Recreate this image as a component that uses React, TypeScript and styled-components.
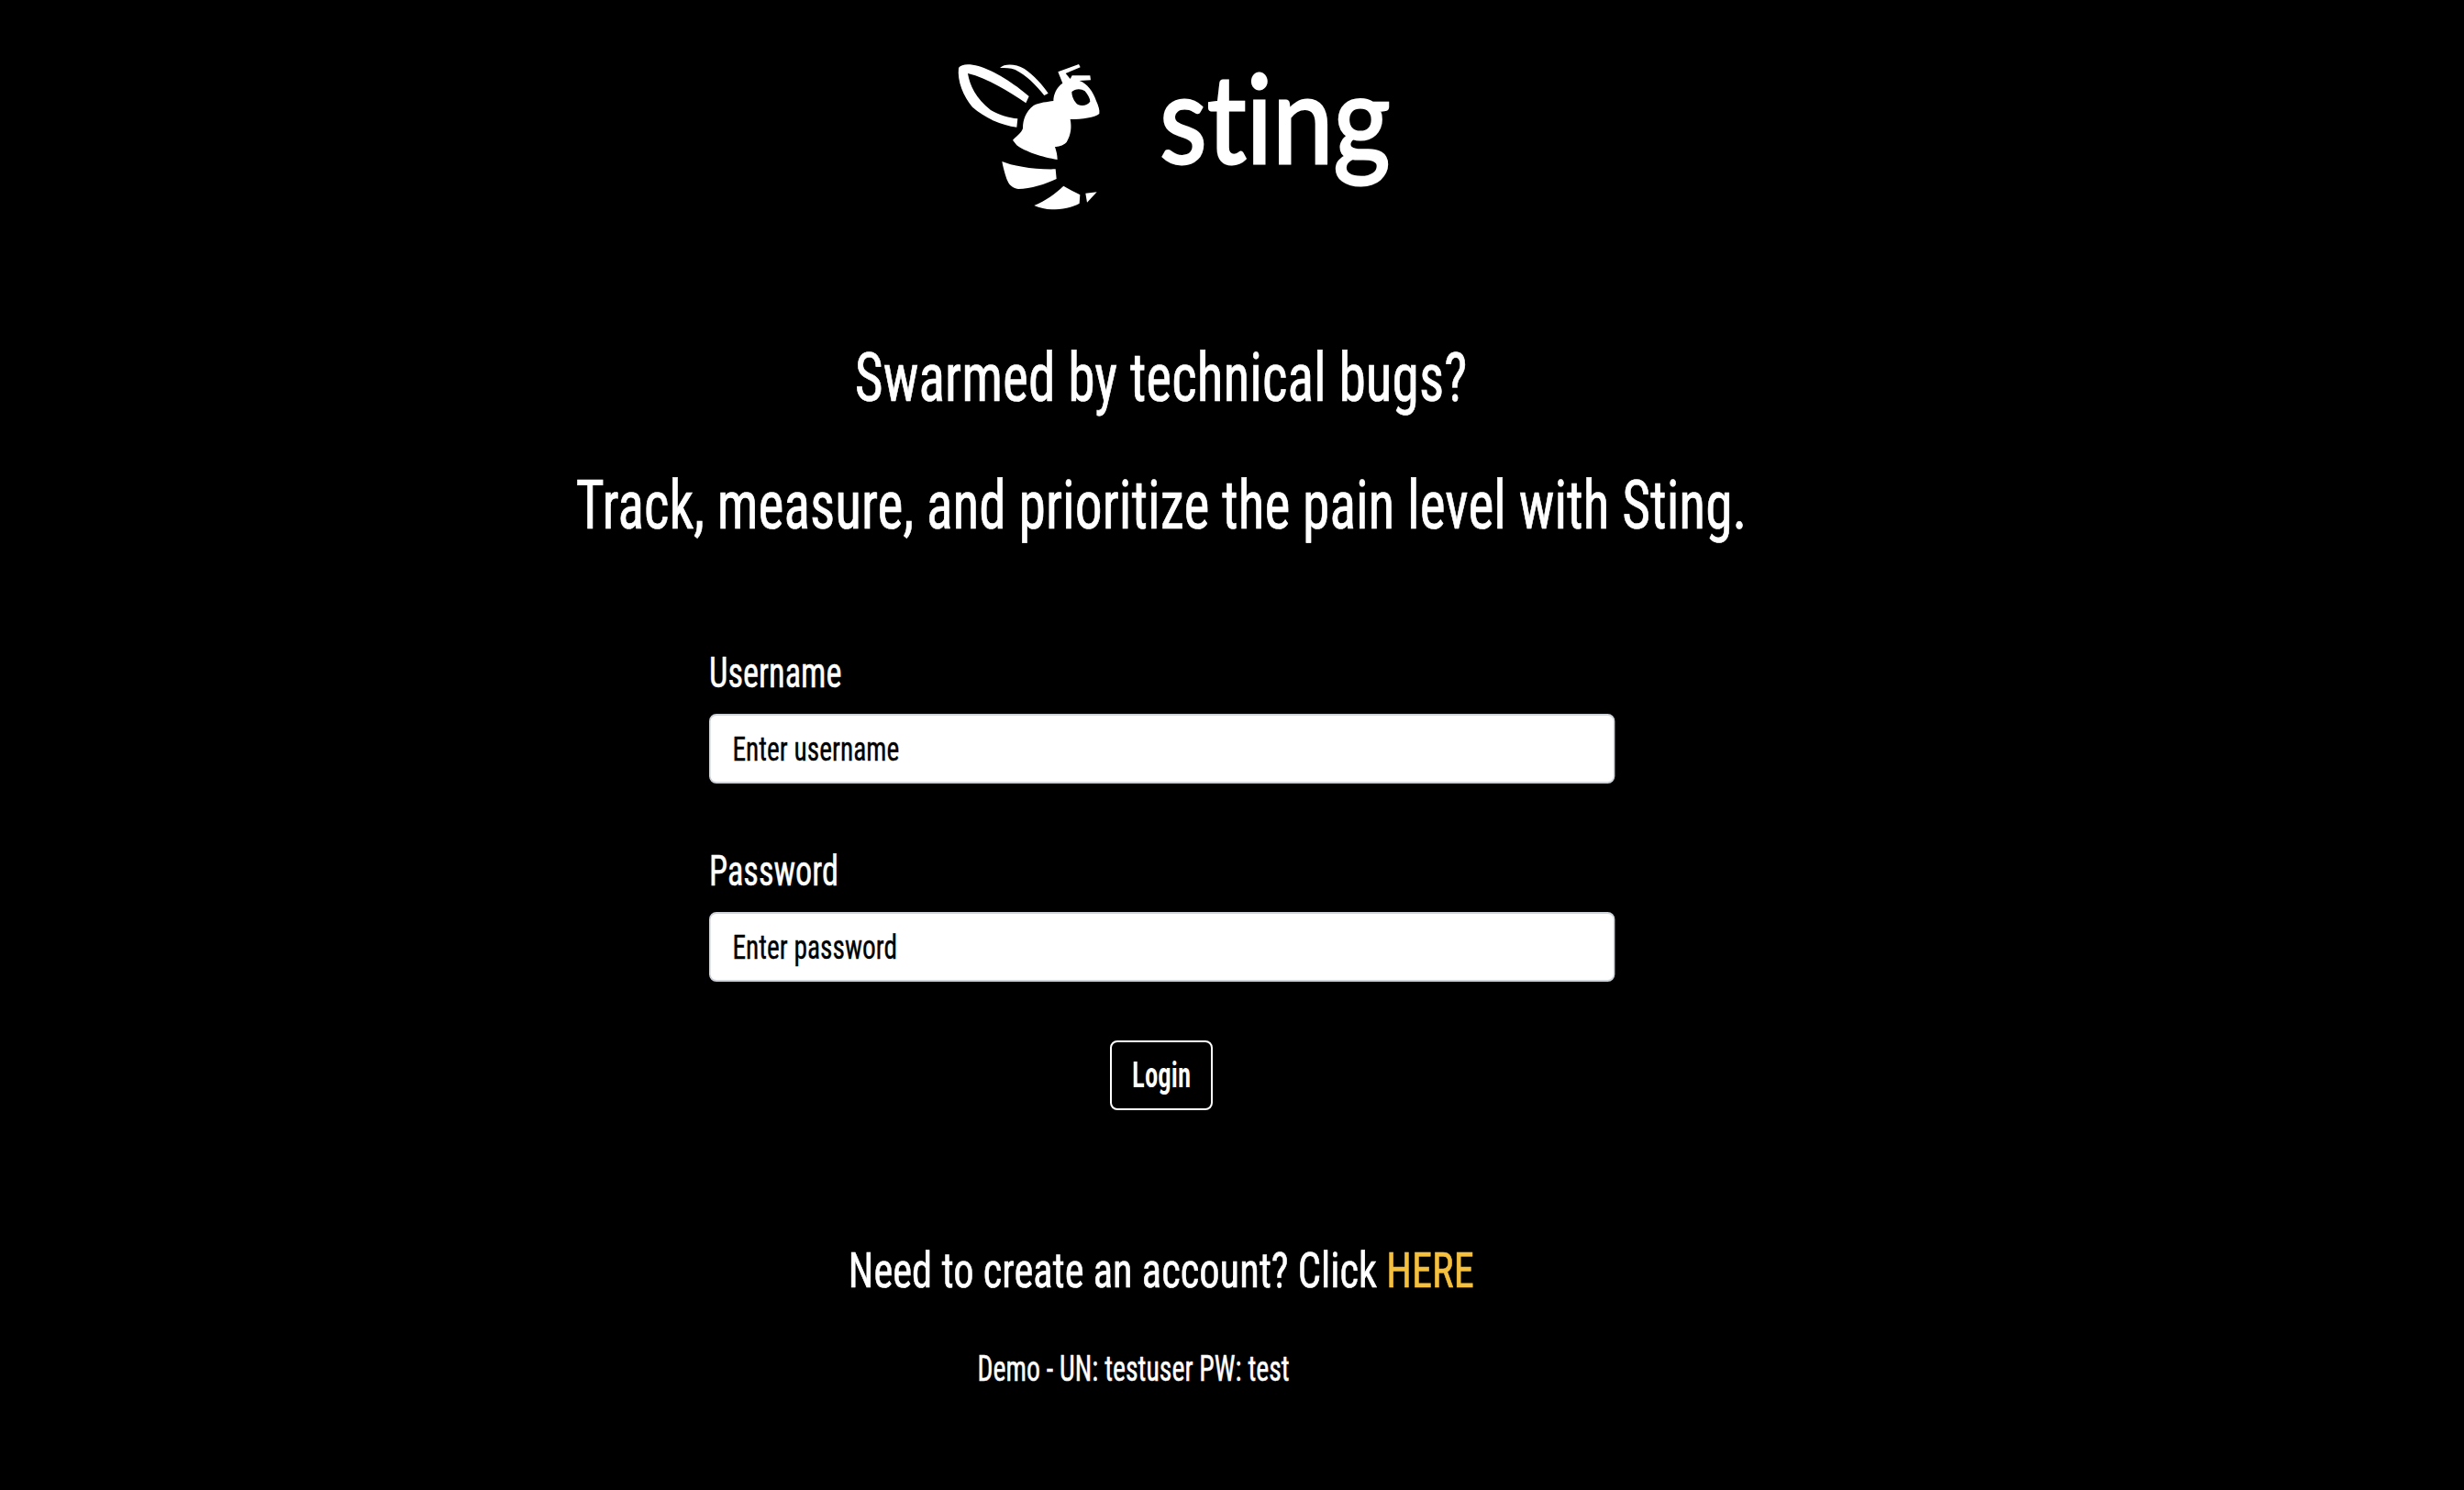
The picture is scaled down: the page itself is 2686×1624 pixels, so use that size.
import React from "react";
import styled, { createGlobalStyle } from "styled-components";

const Global = createGlobalStyle`
  html, body { margin: 0; padding: 0; background: #000; }
  body { font-family: "Roboto Condensed", Roboto, sans-serif; color: #fff; }
`;

const Page = styled.main`
  width: 2686px;
  height: 1624px;
  background: #000;
  display: flex;
  flex-direction: column;
  align-items: center;
  padding-right: 154px;
  box-sizing: border-box;
  overflow: hidden;
`;

const Brand = styled.header`
  display: flex;
  align-items: flex-start;
  gap: 14px;
  height: 250px;
  padding: 60px 0 0 9px;
  box-sizing: border-box;
  width: 510px;
`;

const Wordmark = styled.span`
  font-family: "Lato", sans-serif;
  font-size: 134px;
  line-height: 150px;
  font-weight: 400;
  font-variant-ligatures: none;
  color: #fff;
  -webkit-text-stroke: 3px #fff;
  margin-top: -8px;
  transform: scaleX(0.89);
  transform-origin: left center;
`;

const Tagline = styled.h2<{ $first?: boolean }>`
  margin: ${(p) => (p.$first ? "130px" : "75px")} 0 0;
  font-size: 74px;
  line-height: 64px;
  font-weight: 400;
  -webkit-text-stroke: 0.7px #fff;
  white-space: nowrap;
  transform: scaleX(0.805);
`;

const LoginForm = styled.form`
  width: 987px;
  margin-top: 120px;
  display: flex;
  flex-direction: column;
`;

const Field = styled.div`
  display: flex;
  flex-direction: column;
  align-items: flex-start;
  margin-bottom: 65px;
`;

const Label = styled.label`
  font-size: 46px;
  line-height: 60px;
  font-weight: 400;
  -webkit-text-stroke: 0.5px #fff;
  margin-bottom: 15px;
  transform: scaleX(0.79);
  transform-origin: left center;
`;

/* The input is drawn wider and narrowed as a whole, so that its placeholder gets the condensed look. */
const Input = styled.input`
  width: calc(987px / 0.795);
  height: 76px;
  box-sizing: border-box;
  border: solid #ced4da;
  border-width: 2px 2.5px;
  border-radius: 10px / 8px;
  background: #fff;
  padding: 0 30px;
  font: inherit;
  font-size: 37px;
  font-weight: 400;
  -webkit-text-stroke: 0.4px #000;
  color: #000;
  transform: scaleX(0.795);
  transform-origin: left center;
  &::placeholder { color: #000; opacity: 1; }
`;

const Submit = styled.button`
  align-self: center;
  width: 112px;
  height: 76px;
  margin-top: -1px;
  padding: 0;
  background: transparent;
  border: 2px solid #fff;
  border-radius: 8px;
  color: #fff;
  font: inherit;
  font-size: 38px;
  font-weight: 600;
`;

const SubmitLabel = styled.span`
  display: inline-block;
  transform: scaleX(0.76);
`;

const Signup = styled.p`
  margin: 143px 0 0;
  font-size: 54px;
  line-height: 64px;
  font-weight: 400;
  -webkit-text-stroke: 0.6px #fff;
  white-space: nowrap;
  transform: scaleX(0.824);
`;

const SignupLink = styled.a`
  color: #f5c03e;
  -webkit-text-stroke-color: #f5c03e;
  text-decoration: none;
`;

const Demo = styled.p`
  margin: 50px 0 0 -60px;
  font-size: 38px;
  line-height: 50px;
  font-weight: 400;
  -webkit-text-stroke: 0.5px #fff;
  white-space: nowrap;
  transform: scaleX(0.785);
`;

const Bee = () => (
  <svg width="230" height="190" viewBox="0 0 690 570" aria-label="Sting bee logo" style={{ flex: "none", marginTop: -10 }}>
    <g fill="#fff">
      <path d="M75 72C85 58 110 58 140 66C190 80 260 125 305 165L295 187C240 150 170 105 105 90C112 130 130 170 180 210C210 228 240 235 268 238L265 266C215 260 160 235 120 200C90 165 70 115 75 72Z" />
      <path d="M210 72C225 58 260 58 290 75C320 95 350 128 368 155L355 162C330 130 295 95 260 78C245 72 225 72 210 72Z" />
      <path
        fillRule="evenodd"
        d="M400 85L468 60L473 70L425 90L440 108L446 97L505 97L507 112L470 114C495 122 515 150 525 180C532 195 537 210 535 222C520 235 480 240 440 240C445 265 443 290 428 315C415 328 400 330 390 330C395 345 398 358 398 372C350 365 290 345 265 325L252 308C265 295 280 285 285 270C285 240 295 215 320 195C340 185 365 183 385 180C385 160 395 135 415 122ZM445 150C455 140 475 138 488 148C498 160 505 172 505 182C495 195 480 198 465 192C452 182 445 165 445 150Z"
      />
      <path d="M217 378C250 392 320 405 392 403L395 435C360 452 310 468 270 468C250 465 240 455 232 435C225 415 220 395 217 378Z" />
      <path d="M322 522C360 505 390 485 418 458C435 468 455 478 472 487L470 515C450 528 410 535 380 535C360 534 340 530 322 522Z" />
      <path d="M490 482L527 478L495 512Z" />
    </g>
  </svg>
);

export default function App() {
  return (
    <Page>
      <Global />
      <Brand>
        <Bee />
        <Wordmark>sting</Wordmark>
      </Brand>
      <Tagline $first>Swarmed by technical bugs?</Tagline>
      <Tagline>Track, measure, and prioritize the pain level with Sting.</Tagline>
      <LoginForm>
        <Field>
          <Label htmlFor="username">Username</Label>
          <Input id="username" placeholder="Enter username" />
        </Field>
        <Field>
          <Label htmlFor="password">Password</Label>
          <Input id="password" type="password" placeholder="Enter password" />
        </Field>
        <Submit type="button">
          <SubmitLabel>Login</SubmitLabel>
        </Submit>
      </LoginForm>
      <Signup>
        Need to create an account? Click <SignupLink href="#">HERE</SignupLink>
      </Signup>
      <Demo>Demo - UN: testuser PW: test</Demo>
    </Page>
  );
}
